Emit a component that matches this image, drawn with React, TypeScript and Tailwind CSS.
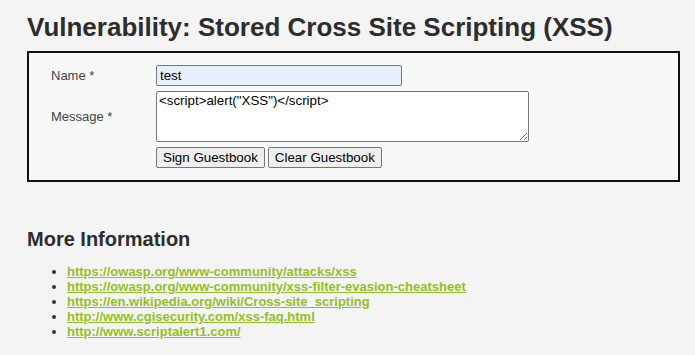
export default function App() {
  const links = [
    "https://owasp.org/www-community/attacks/xss",
    "https://owasp.org/www-community/xss-filter-evasion-cheatsheet",
    "https://en.wikipedia.org/wiki/Cross-site_scripting",
    "http://www.cgisecurity.com/xss-faq.html",
    "http://www.scriptalert1.com/",
  ]

  return (
    <div className="min-h-[355px] bg-[#f4f4f4] font-['Liberation_Sans',Arial,sans-serif] text-[#333]">
      <div className="w-[653px] ml-[27px] pt-[12px]">
        <h1 className="text-[26px] leading-[30px] font-bold text-[#2d2d2d]">
          Vulnerability: Stored Cross Site Scripting (XSS)
        </h1>

        <div className="mt-[9px] border-2 border-[#111] bg-[#f7f8f8] pt-[12px] pb-[12px] pl-[22px]">
          <form className="flex flex-col gap-[5px] text-[13px]">
            <div className="flex items-center">
              <label className="w-[105px] text-[#444]">Name *</label>
              <input
                defaultValue="test"
                className="w-[246px] h-[21px] px-[3px] rounded-[2px] border border-[#767676] bg-[#e8f0fe] text-[13.33px] text-black outline-none"
              />
            </div>
            <div className="flex items-center">
              <label className="w-[105px] text-[#444]">Message *</label>
              <textarea
                defaultValue={'<script>alert("XSS")</script>'}
                className="w-[373px] h-[51px] px-[2px] py-[1px] rounded-[2px] border border-[#767676] bg-white text-[13.33px] leading-[15px] text-black font-['Liberation_Sans',Arial,sans-serif] outline-none"
              />
            </div>
            <div className="flex gap-[3px] pl-[105px]">
              <button type="button" className="h-[21px] px-[6px] rounded-[2px] border border-[#767676] bg-[#efefef] text-[13.33px] text-black">
                Sign Guestbook
              </button>
              <button type="button" className="h-[21px] px-[6px] rounded-[2px] border border-[#767676] bg-[#efefef] text-[13.33px] text-black">
                Clear Guestbook
              </button>
            </div>
          </form>
        </div>

        <h2 className="mt-[46px] text-[20px] leading-[23px] font-bold text-[#2d2d2d]">More Information</h2>
        <ul className="mt-[13px] pl-[40px] list-disc text-[13px] leading-[15px] font-bold marker:text-[#333]">
          {links.map((href) => (
            <li key={href}>
              <a href={href} className="text-[#92c124] underline">
                {href}
              </a>
            </li>
          ))}
        </ul>
      </div>
    </div>
  )
}
